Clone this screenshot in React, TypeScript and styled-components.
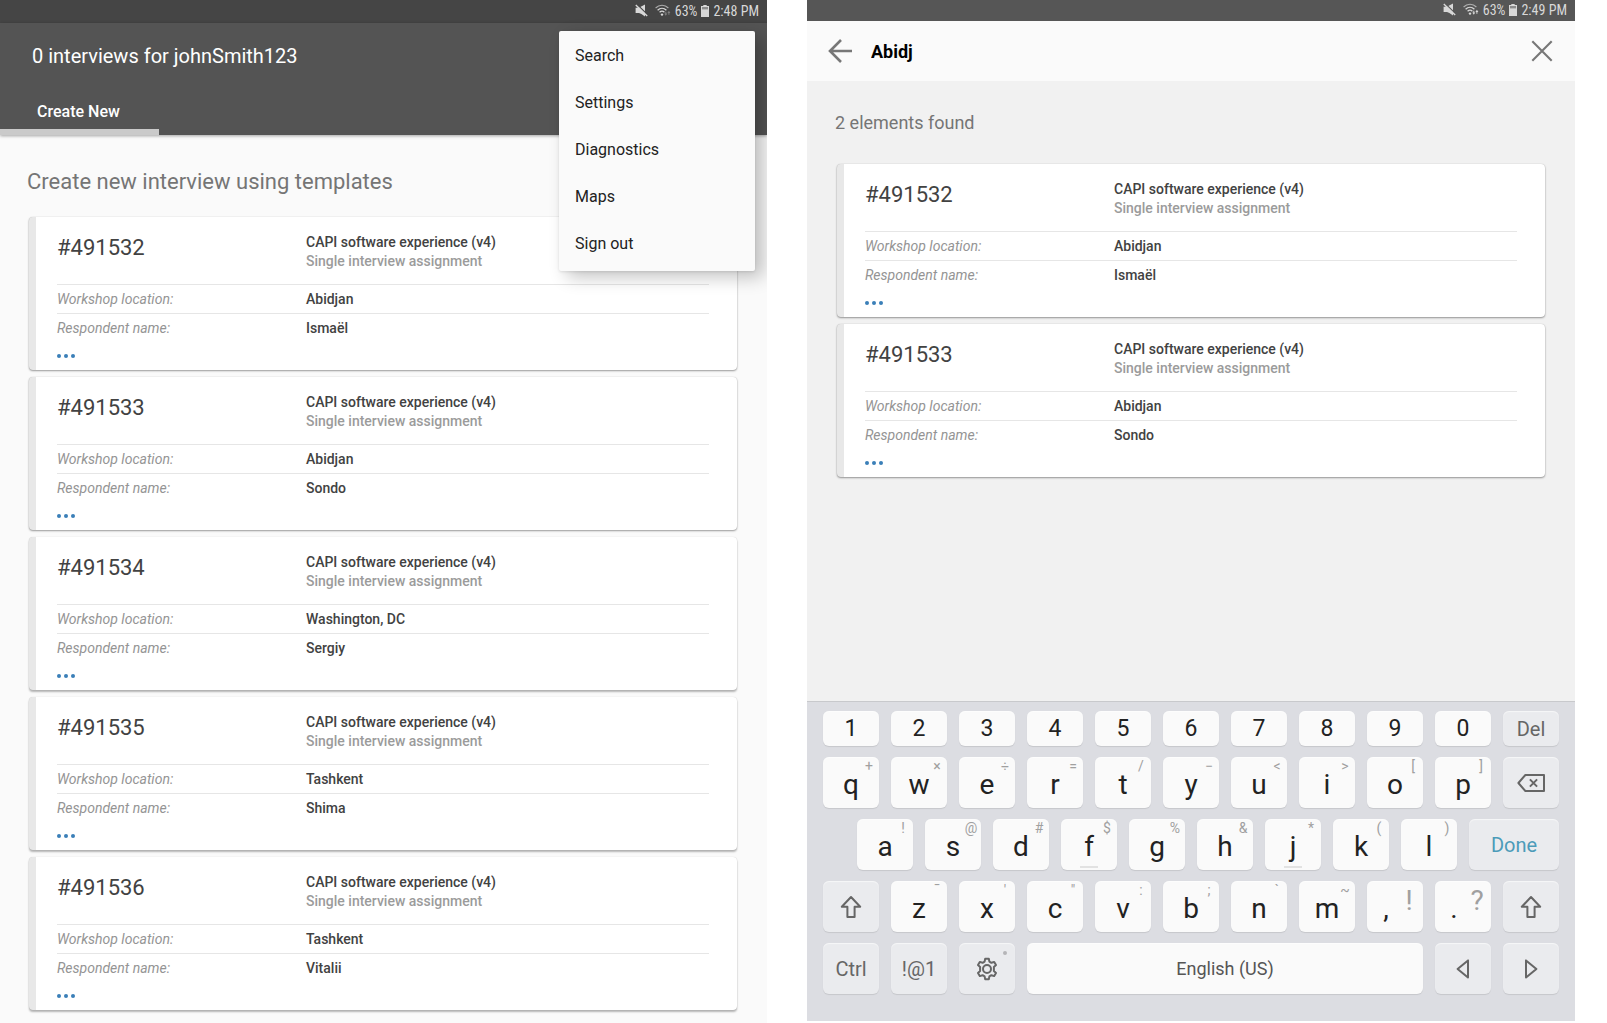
import React, { useState } from "react";
import styled, { createGlobalStyle, css } from "styled-components";

const GlobalStyle = createGlobalStyle`
  *, *::before, *::after { box-sizing: border-box; }
  body {
    margin: 0;
    background: #fff;
    font-family: Roboto, "Noto Sans", sans-serif;
    color: #424242;
  }
  h1, h2, h3, p, ul, dl, dd, dt { margin: 0; padding: 0; font-weight: 400; }
  ul { list-style: none; }
  button, input { font: inherit; color: inherit; border: 0; padding: 0; background: none; }
  svg { display: block; flex: none; }
`;

const Page = styled.main`
  display: grid;
  grid-template-columns: 767fr 768fr;
  gap: 40px;
  padding-right: 32px;
  min-height: 100vh;
`;

const Screen = styled.section<{ $bg: string }>`
  position: relative;
  display: flex;
  flex-direction: column;
  overflow: hidden;
  background: ${(p) => p.$bg};
`;

const SearchScreen = styled(Screen)`
  margin-bottom: 2px;
`;

const StatusBar = styled.div<{ $bg: string; $height: number }>`
  display: flex;
  align-items: center;
  justify-content: flex-end;
  gap: 4px;
  height: ${(p) => p.$height}px;
  padding: 0 8px 2px 0;
  background: ${(p) => p.$bg};
  color: #d8d8d8;
  font-family: "Roboto Condensed", Roboto, sans-serif;
  font-size: 14px;
  line-height: 20px;
`;

const StatusGlyph = styled.span`
  display: flex;
  margin-right: 3px;
`;

const Header = styled.header`
  position: relative;
  display: flex;
  flex-direction: column;
  background: #545454;
  box-shadow: 0 1px 3px rgba(0, 0, 0, 0.35);
`;

const Title = styled.h1`
  padding: 20px 32px 0;
  color: #fff;
  font-size: 20px;
  line-height: 26px;
`;

const Tab = styled.button`
  align-self: flex-start;
  width: 159px;
  height: 48px;
  margin-top: 18px;
  padding: 6px 0 0 37px;
  border-bottom: 6px solid #cacaca;
  color: #fff;
  font-size: 16px;
  font-weight: 500;
  text-align: left;
`;

const Heading = styled.h2`
  padding: 32px 27px 0;
  color: #757575;
  font-size: 22px;
  line-height: 30px;
`;

const Found = styled.p`
  padding: 30px 28px 0;
  color: #757575;
  font-size: 18px;
  line-height: 24px;
`;

const CardList = styled.ul<{ $inset: number; $top: number }>`
  display: flex;
  flex-direction: column;
  gap: 7px;
  padding: ${(p) => p.$top}px 30px 12px ${(p) => p.$inset}px;
`;

const Card = styled.li`
  padding: 0 28px 0 21px;
  border-left: 7px solid #e8e8e8;
  border-radius: 4px;
  background: #fff;
  box-shadow: 0 1px 2px rgba(0, 0, 0, 0.38), 0 0 1px rgba(0, 0, 0, 0.2);

  &:nth-child(n + 3) {
    box-shadow: 0 2px 2px rgba(0, 0, 0, 0.28), 0 0 1px rgba(0, 0, 0, 0.2);
  }
`;

const columns = css`
  display: grid;
  grid-template-columns: 249px 1fr;
`;

const CardHead = styled.div`
  ${columns}
  height: 67px;
  padding-top: 16px;
`;

const CardId = styled.h3`
  font-size: 22px;
  line-height: 30px;
`;

const Template = styled.p`
  font-size: 14px;
  font-weight: 500;
  line-height: 19px;
`;

const Kind = styled(Template)`
  color: #9b9b9b;
`;

const Row = styled.div`
  ${columns}
  height: 29px;
  border-top: 1px solid #e6e6e6;
  font-size: 14px;
  line-height: 29px;
`;

const Term = styled.dt`
  color: #949494;
  font-style: italic;
`;

const Value = styled.dd`
  font-weight: 500;
`;

const More = styled.button`
  display: flex;
  gap: 3px;
  height: 28px;
  padding: 12px 0;
`;

const Dot = styled.span`
  width: 4px;
  height: 4px;
  border-radius: 50%;
  background: #3a7fb8;
`;

const Menu = styled.ul`
  position: absolute;
  top: 31px;
  right: 12px;
  width: 196px;
  padding: 1px 0 4px;
  border-radius: 2px;
  background: #fafafa;
  box-shadow: 8px 6px 18px rgba(0, 0, 0, 0.24), 0 1px 3px rgba(0, 0, 0, 0.1);
`;

const MenuItem = styled.button`
  display: block;
  width: 100%;
  height: 47px;
  padding-left: 16px;
  color: #222;
  font-size: 16px;
  text-align: left;
`;

const SearchBar = styled.form`
  display: flex;
  align-items: center;
  height: 60px;
  padding: 0 22px 0 20px;
  background: #fafafa;
`;

const IconButton = styled.button`
  display: flex;
  color: #777;
`;

const SearchInput = styled.input`
  flex: 1;
  min-width: 0;
  margin-left: 18px;
  padding-top: 2px;
  color: #000;
  font-size: 18px;
  font-weight: 700;
  line-height: 24px;
  outline: none;
`;

const Keyboard = styled.div`
  display: grid;
  grid-template-columns: repeat(22, 1fr);
  grid-template-rows: 35px repeat(4, 51px);
  gap: 11px 12px;
  margin-top: auto;
  padding: 9px 16px 27px;
  border-top: 1px solid #c8c9cc;
  background: #dcdde2;
`;

type KeyTone = "letter" | "digit" | "action" | "done" | "space";

const tones = {
  letter: css`
    padding-top: 4px;
    background: #fafafa;
    color: #222;
    font-size: 28px;
  `,
  digit: css`
    background: #fafafa;
    color: #222;
    font-size: 23px;
  `,
  action: css`
    background: #eaebee;
    color: #666;
    font-size: 20px;
  `,
  done: css`
    background: #eaebee;
    color: #4c9bb9;
    font-size: 20px;
  `,
  space: css`
    background: #fafafa;
    color: #555;
    font-size: 18px;
  `,
};

const KeyCap = styled.button<{ $tone: KeyTone; $span: number; $start?: number; $shared?: boolean }>`
  position: relative;
  display: flex;
  align-items: center;
  justify-content: center;
  grid-column: ${(p) => p.$start ?? "auto"} / span ${(p) => p.$span};
  border-radius: 6px;
  box-shadow: 0 1px 1px rgba(0, 0, 0, 0.1), inset 0 1px 1px rgba(255, 255, 255, 0.6);
  line-height: 32px;
  ${(p) => tones[p.$tone]}
  ${(p) => p.$shared && "padding-right: 18px;"}
`;

const Hint = styled.span<{ $large?: boolean }>`
  position: absolute;
  top: ${(p) => (p.$large ? 4 : 0)}px;
  right: ${(p) => (p.$large ? 4 : 0)}px;
  width: 20px;
  color: #a0a0a0;
  font-size: ${(p) => (p.$large ? 28 : 14)}px;
  line-height: ${(p) => (p.$large ? 32 : 18)}px;
  text-align: center;
`;

const HomeMark = styled.span`
  position: absolute;
  bottom: 2px;
  width: 18px;
  height: 2px;
  background: #e2e2e2;
`;

const HintDot = styled.span`
  position: absolute;
  top: 8px;
  right: 8px;
  width: 4px;
  height: 4px;
  border-radius: 50%;
  background: #b5b5b8;
`;

const MuteIcon = ({ gap }: { gap: string }) => (
  <svg width="13" height="13" viewBox="0 0 13 13" aria-hidden="true">
    <path d="M0.6 3.8h3.2L10 0.4v12.2L6.4 10 4 9H0.6z" fill="currentColor" />
    <path d="M1.6 0 13 11.2" stroke={gap} strokeWidth="1.2" />
    <path d="M0.8 0.9 12.2 12.1" stroke="currentColor" strokeWidth="1.4" />
  </svg>
);

const WifiIcon = ({ active }: { active: boolean }) => (
  <svg width="16" height="13" viewBox="0 0 16 13" fill="none" stroke="currentColor" aria-hidden="true">
    <path d="M0.6 4C4.2 0.4 9.8 0.4 13.4 4" strokeWidth="1.1" opacity="0.7" />
    <path d="M2.6 6.2c2.6-2.5 6.2-2.5 8.8 0" strokeWidth="1.3" />
    <path d="M4.6 8.3c1.4-1.3 3.4-1.3 4.8 0" strokeWidth="1.3" />
    <circle cx="7" cy="10.6" r="1.2" fill="currentColor" stroke="none" />
    <g opacity={active ? 1 : 0.4} fill="currentColor" stroke="none">
      <path d="M9.3 9.6h1V7.8h1v1.8h1l-1.5 2.2z" />
      <path d="M12.4 9 13.9 6.8 15.4 9h-1v1.8h-1V9z" />
    </g>
  </svg>
);

const BatteryIcon = () => (
  <svg width="8" height="12" viewBox="0 0 8 12" fill="currentColor" aria-hidden="true">
    <path d="M2.3 0h3.4v1H8v11H0V1h2.3z" />
    <path d="M1 2h6v2.4H1z" fill="#8c8c8c" />
  </svg>
);

const BackIcon = () => (
  <svg width="26" height="26" viewBox="0 0 26 26" fill="none" stroke="currentColor" strokeWidth="2.6" aria-hidden="true">
    <path d="M25 13H3M14 2 3 13l11 11" />
  </svg>
);

const CloseIcon = () => (
  <svg width="22" height="22" viewBox="0 0 22 22" fill="none" stroke="currentColor" strokeWidth="2.1" aria-hidden="true">
    <path d="M1.3 1.3l19.4 19.4M20.7 1.3 1.3 20.7" />
  </svg>
);

const ShiftIcon = () => (
  <svg width="22" height="24" viewBox="0 0 22 24" fill="none" stroke="currentColor" strokeWidth="2" strokeLinejoin="round" aria-hidden="true">
    <path d="M11 2 1.8 11.8h5.6V22h7.2V11.8h5.6z" />
  </svg>
);

const BackspaceIcon = () => (
  <svg width="28" height="20" viewBox="0 0 28 20" fill="none" stroke="currentColor" strokeWidth="2" strokeLinejoin="round" aria-hidden="true">
    <path d="M8.4 2H27v16H8.4L1.4 10z" />
    <path d="M12.9 6.4l7.2 7.2M20.1 6.4l-7.2 7.2" />
  </svg>
);

const GearIcon = () => (
  <svg width="24" height="24" viewBox="0 0 24 24" fill="none" stroke="currentColor" strokeWidth="2" strokeLinejoin="round" aria-hidden="true">
    <path d="M9.6 4.6 10.2 1.8h3.6l.6 2.8 2 1.2 2.8-.9 1.8 3.1-2.1 1.9v4.2l2.1 1.9-1.8 3.1-2.8-.9-2 1.2-.6 2.8h-3.6l-.6-2.8-2-1.2-2.8.9L3 16l2.1-1.9V9.9L3 8l1.8-3.1 2.8.9z" />
    <circle cx="12" cy="12" r="4" />
  </svg>
);

const CaretIcon = ({ right }: { right?: boolean }) => (
  <svg width="14" height="22" viewBox="0 0 14 22" fill="none" stroke="currentColor" strokeWidth="2" strokeLinejoin="round" aria-hidden="true">
    <path d={right ? "M2 2.4v17.2L12.4 11z" : "M12 2.4v17.2L1.6 11z"} />
  </svg>
);

type Assignment = { id: string; place: string; name: string };

const assignments: Assignment[] = [
  { id: "#491532", place: "Abidjan", name: "Ismaël" },
  { id: "#491533", place: "Abidjan", name: "Sondo" },
  { id: "#491534", place: "Washington, DC", name: "Sergiy" },
  { id: "#491535", place: "Tashkent", name: "Shima" },
  { id: "#491536", place: "Tashkent", name: "Vitalii" },
];

const menuItems = ["Search", "Settings", "Diagnostics", "Maps", "Sign out"];

const digits = [..."1234567890"];
const topRow = [..."qwertyuiop"];
const topHints = [..."+×÷=/−<>[]"];
const homeRow = [..."asdfghjkl"];
const homeHints = [..."!@#$%&*()"];
const bottomRow = [..."zxcvbnm"];
const bottomHints = [..."¯'\":;`~"];

const Status = ({ time, bg, height, active }: { time: string; bg: string; height: number; active: boolean }) => (
  <StatusBar $bg={bg} $height={height}>
    <StatusGlyph><MuteIcon gap={bg} /></StatusGlyph>
    <WifiIcon active={active} />
    <span>63%</span>
    <BatteryIcon />
    <span>{time}</span>
  </StatusBar>
);

const AssignmentCard = ({ id, place, name }: Assignment) => (
  <Card>
    <CardHead>
      <CardId>{id}</CardId>
      <div>
        <Template>CAPI software experience (v4)</Template>
        <Kind>Single interview assignment</Kind>
      </div>
    </CardHead>
    <dl>
      <Row>
        <Term>Workshop location:</Term>
        <Value>{place}</Value>
      </Row>
      <Row>
        <Term>Respondent name:</Term>
        <Value>{name}</Value>
      </Row>
    </dl>
    <More type="button" aria-label="More">
      <Dot />
      <Dot />
      <Dot />
    </More>
  </Card>
);

const LetterKey = ({ label, hint, start }: { label: string; hint: string; start?: number }) => (
  <KeyCap type="button" $tone="letter" $span={2} $start={start}>
    {label}
    <Hint>{hint}</Hint>
    {(label === "f" || label === "j") && <HomeMark />}
  </KeyCap>
);

export default function App() {
  const [query, setQuery] = useState("Abidj");
  const found = assignments.filter((a) => a.place.toLowerCase().startsWith(query.toLowerCase()));

  return (
    <>
      <GlobalStyle />
      <Page>
        <Screen $bg="#fafafa">
          <Status time="2:48 PM" bg="#454545" height={23} active={false} />
          <Header>
            <Title>0 interviews for johnSmith123</Title>
            <Tab type="button">Create New</Tab>
          </Header>
          <Heading>Create new interview using templates</Heading>
          <CardList $inset={29} $top={20}>
            {assignments.map((a) => (
              <AssignmentCard key={a.id} {...a} />
            ))}
          </CardList>
          <Menu>
            {menuItems.map((item) => (
              <li key={item}>
                <MenuItem type="button">{item}</MenuItem>
              </li>
            ))}
          </Menu>
        </Screen>

        <SearchScreen $bg="#f1f1f1">
          <Status time="2:49 PM" bg="#565656" height={21} active />
          <SearchBar onSubmit={(e) => e.preventDefault()}>
            <IconButton type="button" aria-label="Back"><BackIcon /></IconButton>
            <SearchInput aria-label="Search" value={query} onChange={(e) => setQuery(e.target.value)} />
            <IconButton type="button" aria-label="Clear" onClick={() => setQuery("")}><CloseIcon /></IconButton>
          </SearchBar>
          <Found>{found.length} elements found</Found>
          <CardList $inset={30} $top={29}>
            {found.map((a) => (
              <AssignmentCard key={a.id} {...a} />
            ))}
          </CardList>

          <Keyboard>
            {digits.map((d) => (
              <KeyCap key={d} type="button" $tone="digit" $span={2}>{d}</KeyCap>
            ))}
            <KeyCap type="button" $tone="action" $span={2}>Del</KeyCap>

            {topRow.map((k, i) => (
              <LetterKey key={k} label={k} hint={topHints[i]} />
            ))}
            <KeyCap type="button" $tone="action" $span={2} aria-label="Backspace"><BackspaceIcon /></KeyCap>

            {homeRow.map((k, i) => (
              <LetterKey key={k} label={k} hint={homeHints[i]} start={i === 0 ? 2 : undefined} />
            ))}
            <KeyCap type="button" $tone="done" $span={3}>Done</KeyCap>

            <KeyCap type="button" $tone="action" $span={2} aria-label="Shift"><ShiftIcon /></KeyCap>
            {bottomRow.map((k, i) => (
              <LetterKey key={k} label={k} hint={bottomHints[i]} />
            ))}
            <KeyCap type="button" $tone="letter" $span={2} $shared>,<Hint $large>!</Hint></KeyCap>
            <KeyCap type="button" $tone="letter" $span={2} $shared>.<Hint $large>?</Hint></KeyCap>
            <KeyCap type="button" $tone="action" $span={2} aria-label="Shift"><ShiftIcon /></KeyCap>

            <KeyCap type="button" $tone="action" $span={2}>Ctrl</KeyCap>
            <KeyCap type="button" $tone="action" $span={2}>!@1</KeyCap>
            <KeyCap type="button" $tone="action" $span={2} aria-label="Settings"><GearIcon /><HintDot /></KeyCap>
            <KeyCap type="button" $tone="space" $span={12}>English (US)</KeyCap>
            <KeyCap type="button" $tone="action" $span={2} aria-label="Left"><CaretIcon /></KeyCap>
            <KeyCap type="button" $tone="action" $span={2} aria-label="Right"><CaretIcon right /></KeyCap>
          </Keyboard>
        </SearchScreen>
      </Page>
    </>
  );
}
